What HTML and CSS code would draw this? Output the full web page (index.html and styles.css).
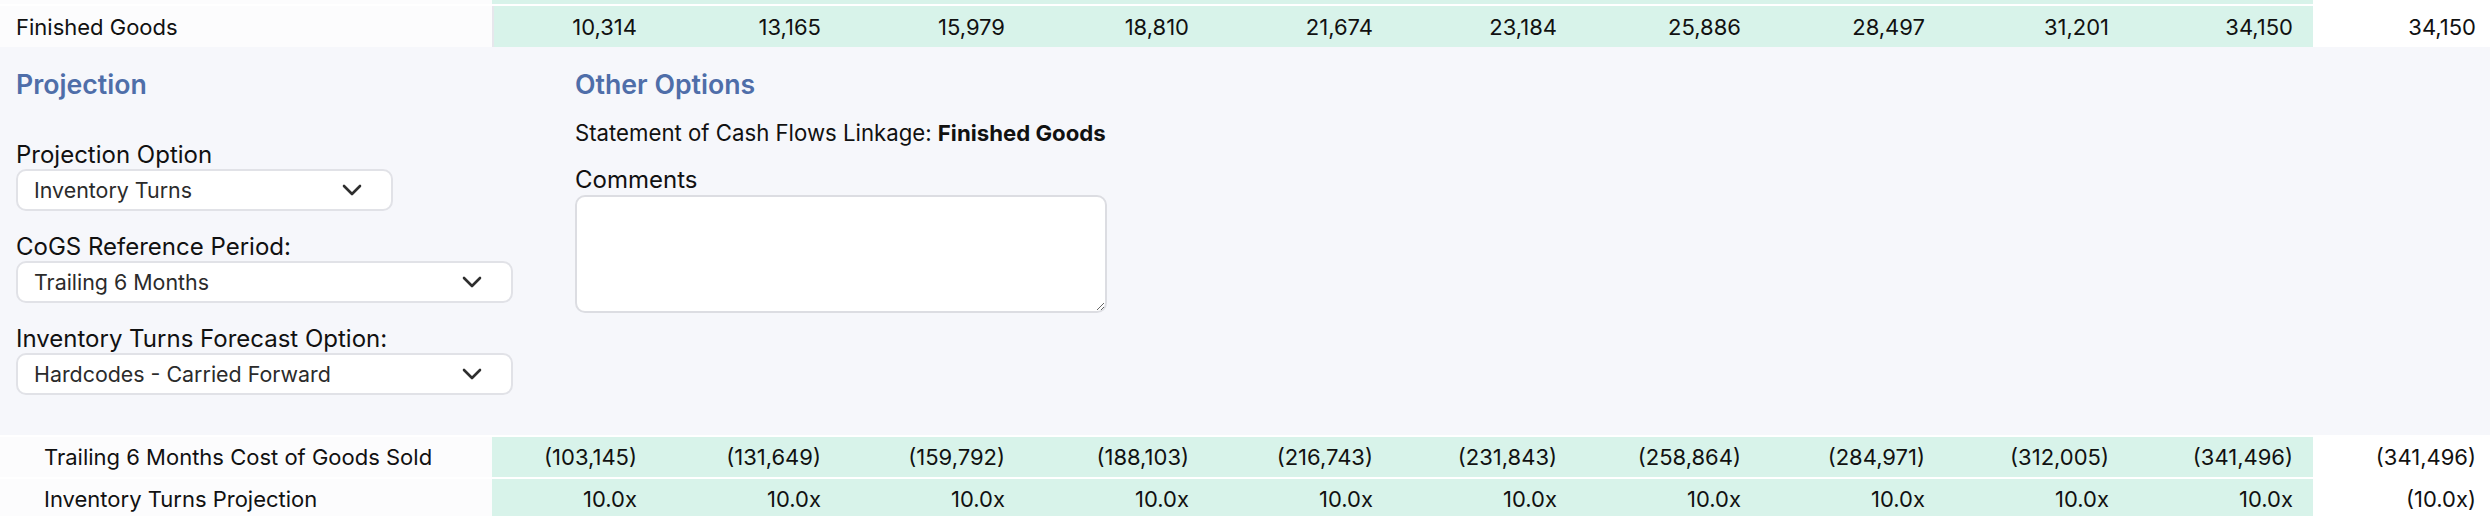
FILE: index.html
```html
<!DOCTYPE html>
<html lang="en">
<head>
    <meta charset="UTF-8">
    <meta name="viewport" content="width=device-width, initial-scale=1.0">
    <title>Finished Goods</title>
    <link rel="stylesheet" href="styles.css">
</head>
<body>
    <div class="sheet">
        <div class="row prev">
            <div class="label"></div>
            <div class="cell"></div><div class="cell"></div><div class="cell"></div><div class="cell"></div><div class="cell"></div>
            <div class="cell"></div><div class="cell"></div><div class="cell"></div><div class="cell"></div><div class="cell"></div>
            <div class="total"></div>
        </div>
        <div class="row top">
            <div class="label">Finished Goods</div>
            <div class="cell">10,314</div>
            <div class="cell">13,165</div>
            <div class="cell">15,979</div>
            <div class="cell">18,810</div>
            <div class="cell">21,674</div>
            <div class="cell">23,184</div>
            <div class="cell">25,886</div>
            <div class="cell">28,497</div>
            <div class="cell">31,201</div>
            <div class="cell">34,150</div>
            <div class="total">34,150</div>
        </div>

        <!-- Options panel -->
        <div class="panel">
            <div class="col left">
                <h3>Projection</h3>
                <div class="field first">
                    <label>Projection Option</label>
                    <div class="select short">
                        <span>Inventory Turns</span>
                        <svg width="20" height="12" viewBox="0 0 20 12"><path d="M2 2l8 8 8-8" /></svg>
                    </div>
                </div>
                <div class="field">
                    <label>CoGS Reference Period:</label>
                    <div class="select">
                        <span>Trailing 6 Months</span>
                        <svg width="20" height="12" viewBox="0 0 20 12"><path d="M2 2l8 8 8-8" /></svg>
                    </div>
                </div>
                <div class="field">
                    <label>Inventory Turns Forecast Option:</label>
                    <div class="select">
                        <span>Hardcodes - Carried Forward</span>
                        <svg width="20" height="12" viewBox="0 0 20 12"><path d="M2 2l8 8 8-8" /></svg>
                    </div>
                </div>
            </div>
            <div class="col right">
                <h3>Other Options</h3>
                <p class="linkage">Statement of Cash Flows Linkage: <b>Finished Goods</b></p>
                <div class="field comments">
                    <label>Comments</label>
                    <textarea></textarea>
                </div>
            </div>
        </div>

        <div class="row sub">
            <div class="label">Trailing 6 Months Cost of Goods Sold</div>
            <div class="cell">(103,145)</div>
            <div class="cell">(131,649)</div>
            <div class="cell">(159,792)</div>
            <div class="cell">(188,103)</div>
            <div class="cell">(216,743)</div>
            <div class="cell">(231,843)</div>
            <div class="cell">(258,864)</div>
            <div class="cell">(284,971)</div>
            <div class="cell">(312,005)</div>
            <div class="cell">(341,496)</div>
            <div class="total">(341,496)</div>
        </div>
        <div class="row sub">
            <div class="label">Inventory Turns Projection</div>
            <div class="cell">10.0x</div>
            <div class="cell">10.0x</div>
            <div class="cell">10.0x</div>
            <div class="cell">10.0x</div>
            <div class="cell">10.0x</div>
            <div class="cell">10.0x</div>
            <div class="cell">10.0x</div>
            <div class="cell">10.0x</div>
            <div class="cell">10.0x</div>
            <div class="cell">10.0x</div>
            <div class="total">(10.0x)</div>
        </div>
    </div>
</body>
</html>
```

FILE: styles.css
```css
* {
    margin: 0;
    padding: 0;
    box-sizing: border-box;
    font-family: Inter, "Liberation Sans", sans-serif;
}
body {
    background-color: white;
    width: 2490px;
    overflow: hidden;
}
.row {
    display: grid;
    grid-template-columns: 492px 165px repeat(9, 184px) 1fr;
    height: 40px;
    font-size: 22px;
    color: #111;
}
.row .label {
    background: #fcfcfd;
    padding-left: 16px;
    display: flex;
    align-items: center;
}
.row .cell {
    background: #d8f3ea;
    display: flex;
    align-items: center;
    justify-content: flex-end;
    padding-right: 20px;
}
.row .total {
    background: white;
    display: flex;
    align-items: center;
    justify-content: flex-end;
    padding-right: 14px;
}
.row.prev {
    height: 4px;
    margin-bottom: 2px;
}
.row.top {
    height: 41px;
}
.row.top .cell:nth-child(2) {
    border-left: 2px solid #e6e7ec;
}
.row.sub {
    margin-top: 2px;
}
.row.sub:first-of-type {
    margin-top: 1px;
}
.row.sub .label {
    padding-left: 44px;
}
/* Panel */
.panel {
    background: #f6f7fb;
    height: 388px;
    display: flex;
    padding: 22px 0 0 16px;
}
.col {
    display: flex;
    flex-direction: column;
}
.col.left {
    width: 559px;
}
h3 {
    font-size: 26.7px;
    font-weight: 600;
    color: #4f6ea9;
    line-height: 30px;
}
.field {
    display: flex;
    flex-direction: column;
    margin-top: 22px;
}
.field.first {
    margin-top: 42px;
}
label {
    font-size: 24px;
    line-height: 28px;
    color: #111;
}
.select {
    width: 497px;
    height: 42px;
    background: white;
    border: 2px solid #e1e2e7;
    border-radius: 10px;
    display: flex;
    align-items: center;
    justify-content: space-between;
    padding: 0 29px 0 16px;
    font-size: 21.4px;
    color: #2b2b2b;
}
.select.short {
    width: 377px;
}
.select svg path {
    fill: none;
    stroke: #2e2e2e;
    stroke-width: 2.6;
    stroke-linecap: round;
    stroke-linejoin: round;
}
.linkage {
    font-size: 22.2px;
    line-height: 28px;
    color: #111;
    margin-top: 20px;
}
.linkage b {
    font-weight: 700;
}
.field.comments {
    margin-top: 19px;
    gap: 1px;
}
textarea {
    width: 532px;
    height: 118px;
    border: 2px solid #dcdde2;
    border-radius: 10px;
    background: white;
    resize: both;
}
```
